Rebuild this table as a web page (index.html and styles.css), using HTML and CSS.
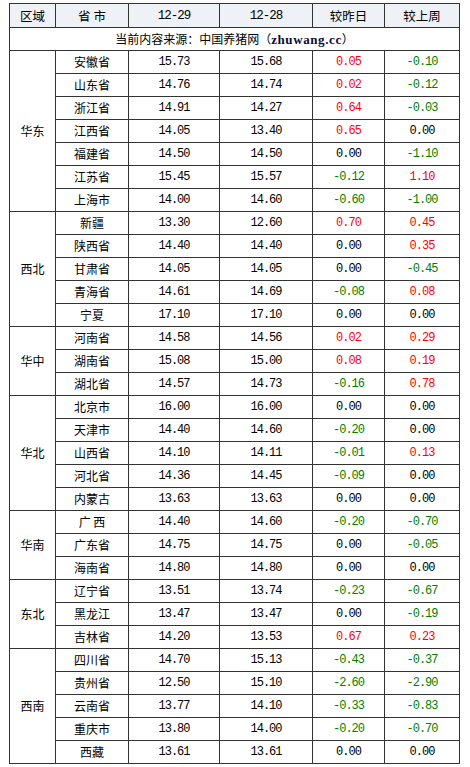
FILE: index.html
```html
<!DOCTYPE html>
<html lang="zh">
<head>
<meta charset="utf-8">
<link rel="stylesheet" href="styles.css">
</head>
<body>
<table class="price">
<colgroup><col class="c1"><col class="c2"><col class="c3"><col class="c4"><col class="c5"><col class="c6"></colgroup>
<thead>
<tr class="head"><th>区域</th><th>省 市</th><th class="num">12-29</th><th class="num">12-28</th><th>较昨日</th><th>较上周</th></tr>
</thead>
<tbody>
<tr class="src"><td colspan="6">当前内容来源：中国养猪网（<b class="site">zhuwang.cc</b>）</td></tr>
<tr><td rowspan="7">华东</td><td>安徽省</td><td class="num">15.73</td><td class="num">15.68</td><td class="num up">0.05</td><td class="num down">-0.10</td></tr>
<tr><td>山东省</td><td class="num">14.76</td><td class="num">14.74</td><td class="num up">0.02</td><td class="num down">-0.12</td></tr>
<tr><td>浙江省</td><td class="num">14.91</td><td class="num">14.27</td><td class="num up">0.64</td><td class="num down">-0.03</td></tr>
<tr><td>江西省</td><td class="num">14.05</td><td class="num">13.40</td><td class="num up">0.65</td><td class="num">0.00</td></tr>
<tr><td>福建省</td><td class="num">14.50</td><td class="num">14.50</td><td class="num">0.00</td><td class="num down">-1.10</td></tr>
<tr><td>江苏省</td><td class="num">15.45</td><td class="num">15.57</td><td class="num down">-0.12</td><td class="num up">1.10</td></tr>
<tr><td>上海市</td><td class="num">14.00</td><td class="num">14.60</td><td class="num down">-0.60</td><td class="num down">-1.00</td></tr>
<tr><td rowspan="5">西北</td><td>新疆</td><td class="num">13.30</td><td class="num">12.60</td><td class="num up">0.70</td><td class="num up">0.45</td></tr>
<tr><td>陕西省</td><td class="num">14.40</td><td class="num">14.40</td><td class="num">0.00</td><td class="num up">0.35</td></tr>
<tr><td>甘肃省</td><td class="num">14.05</td><td class="num">14.05</td><td class="num">0.00</td><td class="num down">-0.45</td></tr>
<tr><td>青海省</td><td class="num">14.61</td><td class="num">14.69</td><td class="num down">-0.08</td><td class="num up">0.08</td></tr>
<tr><td>宁夏</td><td class="num">17.10</td><td class="num">17.10</td><td class="num">0.00</td><td class="num">0.00</td></tr>
<tr><td rowspan="3">华中</td><td>河南省</td><td class="num">14.58</td><td class="num">14.56</td><td class="num up">0.02</td><td class="num up">0.29</td></tr>
<tr><td>湖南省</td><td class="num">15.08</td><td class="num">15.00</td><td class="num up">0.08</td><td class="num up">0.19</td></tr>
<tr><td>湖北省</td><td class="num">14.57</td><td class="num">14.73</td><td class="num down">-0.16</td><td class="num up">0.78</td></tr>
<tr><td rowspan="5">华北</td><td>北京市</td><td class="num">16.00</td><td class="num">16.00</td><td class="num">0.00</td><td class="num">0.00</td></tr>
<tr><td>天津市</td><td class="num">14.40</td><td class="num">14.60</td><td class="num down">-0.20</td><td class="num">0.00</td></tr>
<tr><td>山西省</td><td class="num">14.10</td><td class="num">14.11</td><td class="num down">-0.01</td><td class="num up">0.13</td></tr>
<tr><td>河北省</td><td class="num">14.36</td><td class="num">14.45</td><td class="num down">-0.09</td><td class="num">0.00</td></tr>
<tr><td>内蒙古</td><td class="num">13.63</td><td class="num">13.63</td><td class="num">0.00</td><td class="num">0.00</td></tr>
<tr><td rowspan="3">华南</td><td>广 西</td><td class="num">14.40</td><td class="num">14.60</td><td class="num down">-0.20</td><td class="num down">-0.70</td></tr>
<tr><td>广东省</td><td class="num">14.75</td><td class="num">14.75</td><td class="num">0.00</td><td class="num down">-0.05</td></tr>
<tr><td>海南省</td><td class="num">14.80</td><td class="num">14.80</td><td class="num">0.00</td><td class="num">0.00</td></tr>
<tr><td rowspan="3">东北</td><td>辽宁省</td><td class="num">13.51</td><td class="num">13.74</td><td class="num down">-0.23</td><td class="num down">-0.67</td></tr>
<tr><td>黑龙江</td><td class="num">13.47</td><td class="num">13.47</td><td class="num">0.00</td><td class="num down">-0.19</td></tr>
<tr><td>吉林省</td><td class="num">14.20</td><td class="num">13.53</td><td class="num up">0.67</td><td class="num up">0.23</td></tr>
<tr><td rowspan="5">西南</td><td>四川省</td><td class="num">14.70</td><td class="num">15.13</td><td class="num down">-0.43</td><td class="num down">-0.37</td></tr>
<tr><td>贵州省</td><td class="num">12.50</td><td class="num">15.10</td><td class="num down">-2.60</td><td class="num down">-2.90</td></tr>
<tr><td>云南省</td><td class="num">13.77</td><td class="num">14.10</td><td class="num down">-0.33</td><td class="num down">-0.83</td></tr>
<tr><td>重庆市</td><td class="num">13.80</td><td class="num">14.00</td><td class="num down">-0.20</td><td class="num down">-0.70</td></tr>
<tr><td>西藏</td><td class="num">13.61</td><td class="num">13.61</td><td class="num">0.00</td><td class="num">0.00</td></tr>
</tbody>
</table>
</body>
</html>
```

FILE: styles.css
```css
html, body {
  margin: 0;
  padding: 0;
  background: #fff;
}
body {
  padding: 3px 0 0 9px;
  font-family: "Noto Sans CJK SC", "DejaVu Sans", sans-serif;
  font-size: 12px;
  color: #000;
}
.price {
  border-collapse: collapse;
  table-layout: fixed;
  width: 450px;
}
.c1 { width: 46px; }
.c2 { width: 73px; }
.c3 { width: 91px; }
.c4 { width: 93px; }
.c5 { width: 72px; }
.c6 { width: 75px; }
.price th,
.price td {
  border: 1px solid #333;
  padding: 0;
  height: 22px;
  line-height: 14px;
  text-align: center;
  vertical-align: middle;
  font-weight: normal;
  white-space: nowrap;
  overflow: hidden;
}
.head th {
  height: 23px;
  background: #eef2f6;
  font-size: 12.5px;
}
.num {
  font-family: "Liberation Mono", "DejaVu Sans Mono", monospace;
  font-size: 12px;
  letter-spacing: -1px;
}
.up { color: #f00; }
.down { color: #008000; }
.site {
  font-family: "Liberation Serif", serif;
  font-weight: bold;
  font-size: 13px;
  color: #0a0a3a;
  letter-spacing: 0.6px;
}
```
